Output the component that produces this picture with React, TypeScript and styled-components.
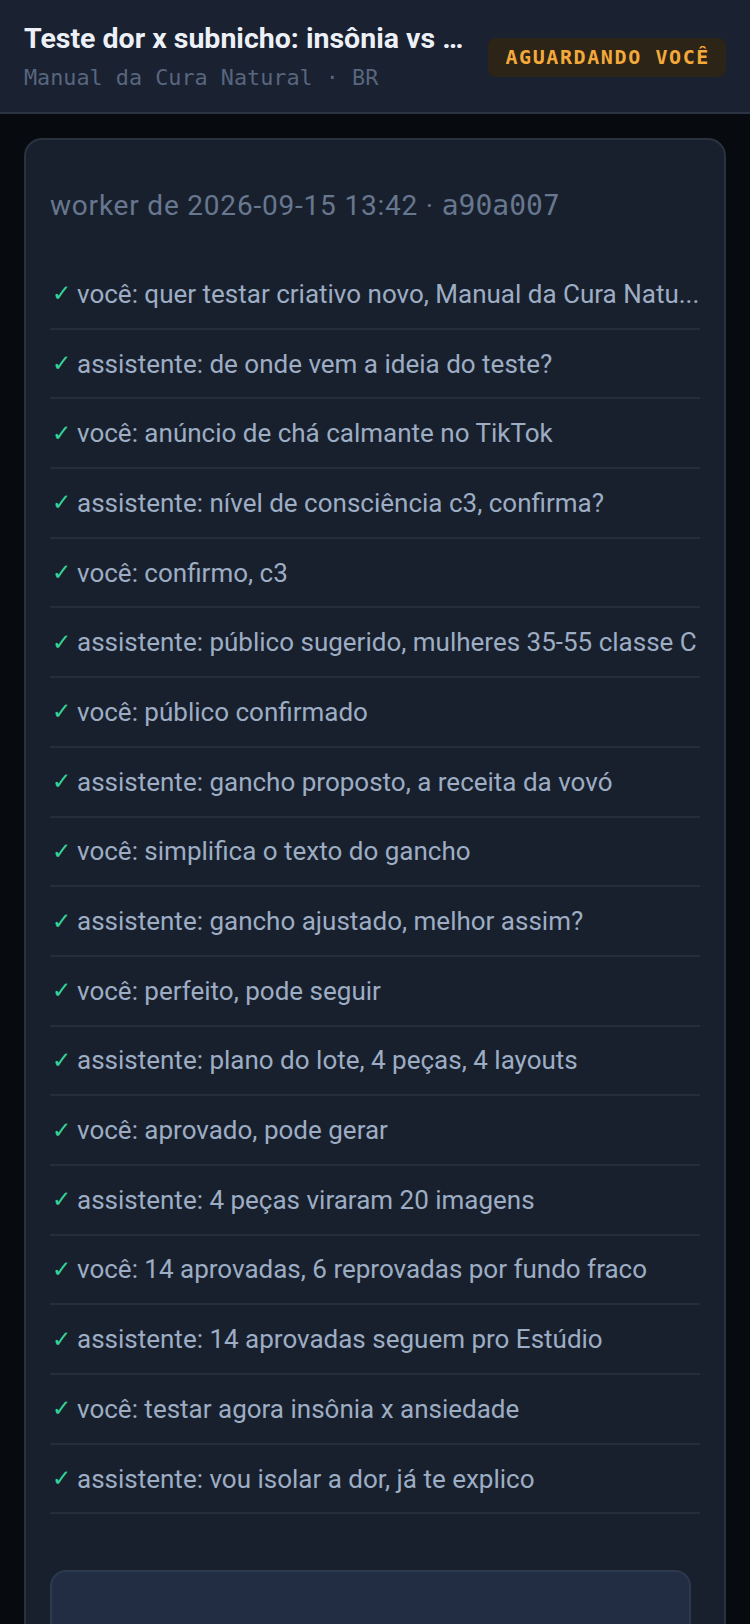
import styled, { createGlobalStyle } from "styled-components";

const GlobalStyle = createGlobalStyle`
  * {
    box-sizing: border-box;
  }
  html, body {
    margin: 0;
    padding: 0;
    background: #070a0f;
  }
  body {
    font-family: Roboto, "Noto Sans", sans-serif;
    -webkit-font-smoothing: antialiased;
  }
`;

const Page = styled.div`
  min-height: 100vh;
  background: #070a0f;
`;

const Header = styled.header`
  display: flex;
  align-items: center;
  padding: 22px 24px 20px;
  background: #1a2131;
  border-bottom: 2px solid #2c3443;
`;

const TitleBox = styled.div`
  flex: 1;
  min-width: 0;
`;

const Title = styled.h1`
  margin: 0;
  font-size: 28.5px;
  line-height: 34px;
  font-weight: 700;
  color: #edf1f7;
  white-space: nowrap;
  overflow: hidden;
  text-overflow: ellipsis;
`;

const Subtitle = styled.div`
  margin-top: 8px;
  font-family: "DejaVu Sans Mono", "Liberation Mono", monospace;
  font-size: 21.8px;
  line-height: 28px;
  color: #58667e;
  white-space: nowrap;
`;

const Badge = styled.span`
  flex-shrink: 0;
  margin-left: 22px;
  height: 39px;
  padding: 0 16px 0 17px;
  border-radius: 8px;
  background: #2c2416;
  color: #f4a93b;
  font-family: "DejaVu Sans Mono", "Liberation Mono", monospace;
  font-size: 20px;
  font-weight: 700;
  line-height: 39px;
  letter-spacing: 1.6px;
`;

const Main = styled.main`
  padding: 24px;
`;

const Card = styled.section`
  background: #19202d;
  border: 2px solid #2a323f;
  border-radius: 18px;
  padding: 24px 24px 40px;
`;

const WorkerLine = styled.div`
  margin: 22px 0 34px;
  font-size: 28px;
  line-height: 40px;
  letter-spacing: 0.8px;
  color: #67778f;
  white-space: nowrap;
`;

const Hash = styled.code`
  font-family: "DejaVu Sans Mono", "Liberation Mono", monospace;
  font-size: 28px;
  letter-spacing: 0;
`;

const Steps = styled.ul`
  list-style: none;
  margin: 0;
  padding: 0;
`;

const Step = styled.li`
  display: flex;
  align-items: center;
  height: 69.7px;
  border-bottom: 2px solid #252d3a;
  font-size: 26px;
  color: #9dadc4;
`;

const Check = styled.span`
  flex-shrink: 0;
  width: 27px;
  padding-left: 2px;
  font-family: "DejaVu Sans", sans-serif;
  font-size: 23px;
  font-weight: 700;
  line-height: 1;
  color: #34d399;
`;

const StepText = styled.span`
  min-width: 0;
  white-space: nowrap;
  overflow: hidden;
  text-overflow: ellipsis;
`;

const Composer = styled.div`
  margin: 56px 9px 0 0;
  min-height: 180px;
  background: #222d44;
  border: 2px solid #2d394e;
  border-radius: 16px;
`;

const steps = [
  "você: quer testar criativo novo, Manual da Cura Natu...",
  "assistente: de onde vem a ideia do teste?",
  "você: anúncio de chá calmante no TikTok",
  "assistente: nível de consciência c3, confirma?",
  "você: confirmo, c3",
  "assistente: público sugerido, mulheres 35-55 classe C",
  "você: público confirmado",
  "assistente: gancho proposto, a receita da vovó",
  "você: simplifica o texto do gancho",
  "assistente: gancho ajustado, melhor assim?",
  "você: perfeito, pode seguir",
  "assistente: plano do lote, 4 peças, 4 layouts",
  "você: aprovado, pode gerar",
  "assistente: 4 peças viraram 20 imagens",
  "você: 14 aprovadas, 6 reprovadas por fundo fraco",
  "assistente: 14 aprovadas seguem pro Estúdio",
  "você: testar agora insônia x ansiedade",
  "assistente: vou isolar a dor, já te explico",
];

function App() {
  return (
    <Page>
      <GlobalStyle />
      <Header>
        <TitleBox>
          <Title>Teste dor x subnicho: insônia vs ...</Title>
          <Subtitle>Manual da Cura Natural · BR</Subtitle>
        </TitleBox>
        <Badge>AGUARDANDO VOCÊ</Badge>
      </Header>
      <Main>
        <Card>
          <WorkerLine>
            worker de 2026-09-15 13:42 · <Hash>a90a007</Hash>
          </WorkerLine>
          <Steps>
            {steps.map((s) => (
              <Step key={s}>
                <Check>✓</Check>
                <StepText>{s}</StepText>
              </Step>
            ))}
          </Steps>
          <Composer />
        </Card>
      </Main>
    </Page>
  );
}

export default App;
